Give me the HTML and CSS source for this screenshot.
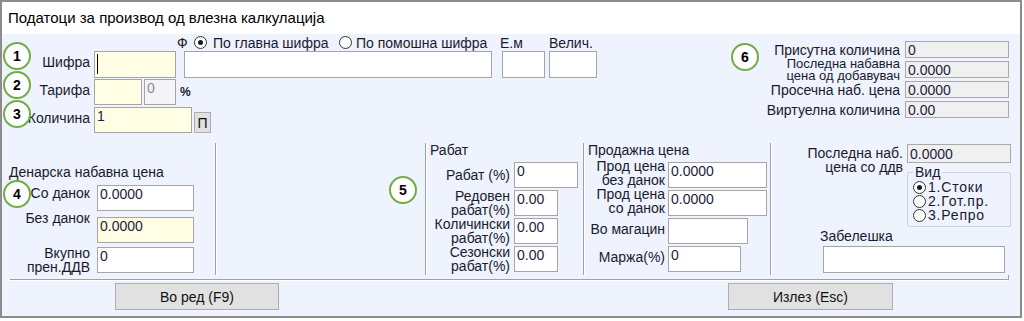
FILE: index.html
```html
<!DOCTYPE html>
<html lang="mk">
<head>
  <meta charset="UTF-8">
  <title>Податоци за производ од влезна калкулација</title>
  <link rel="stylesheet" href="styles.css">
</head>
<body>

<div class="window">
  <div class="titlebar">Податоци за производ од влезна калкулација</div>

  <div class="body">
    <div class="top">
      <div class="main">
        <div class="row row-search">
          <span class="clip">Ф</span>
          <label class="radio r-main"><span class="dot on"></span>По главна шифра</label>
          <label class="radio r-alt"><span class="dot"></span>По помошна шифра</label>
          <span class="cap cap-em">Е.м</span>
          <span class="cap">Велич.</span>
        </div>
        <div class="row row-code">
          <label class="lbl">Шифра</label>
          <span class="caret-wrap"><input class="tb yellow w-code" type="text"></span>
          <input class="tb w-name" type="text">
          <input class="tb w-em" type="text">
          <input class="tb w-vel" type="text">
        </div>
        <div class="row row-tariff">
          <label class="lbl">Тарифа</label>
          <input class="tb yellow w-tariff" type="text">
          <input class="tb muted w-rate" type="text" value="0">
          <span class="pct">%</span>
        </div>
        <div class="row row-qty">
          <label class="lbl">Количина</label>
          <input class="tb yellow w-qty" type="text" value="1">
          <button class="mini">П</button>
        </div>
      </div>

      <div class="stock">
        <span class="lbl">Присутна количина</span>
        <input class="ro" type="text" value="0">
        <span class="lbl tight">Последна набавна<br>цена од добавувач</span>
        <input class="ro" type="text" value="0.0000">
        <span class="lbl">Просечна наб. цена</span>
        <input class="ro" type="text" value="0.0000">
        <span class="lbl">Виртуелна количина</span>
        <input class="ro" type="text" value="0.00">
      </div>
    </div>

    <div class="lower">
      <div class="group g-den">
        <div class="head">Денарска набавна цена</div>
        <div class="frow d1">
          <label class="lbl">Со данок</label>
          <input class="tb w-den" type="text" value="0.0000">
        </div>
        <div class="frow d2">
          <label class="lbl">Без данок</label>
          <input class="tb yellow w-den" type="text" value="0.0000">
        </div>
        <div class="frow d3">
          <label class="lbl two">Вкупно<br>прен.ДДВ</label>
          <input class="tb w-den" type="text" value="0">
        </div>
      </div>

      <div class="group g-gap"></div>

      <div class="group g-rabat">
        <div class="head">Рабат</div>
        <div class="frow first">
          <label class="lbl">Рабат (%)</label>
          <input class="tb w-r1" type="text" value="0">
        </div>
        <div class="frow">
          <label class="lbl two">Редовен<br>рабат(%)</label>
          <input class="tb w-r2" type="text" value="0.00">
        </div>
        <div class="frow">
          <label class="lbl two">Количински<br>рабат(%)</label>
          <input class="tb w-r2" type="text" value="0.00">
        </div>
        <div class="frow">
          <label class="lbl two">Сезонски<br>рабат(%)</label>
          <input class="tb w-r2" type="text" value="0.00">
        </div>
      </div>

      <div class="group g-prod">
        <div class="head">Продажна цена</div>
        <div class="frow first">
          <label class="lbl two">Прод цена<br>без данок</label>
          <input class="tb w-p1" type="text" value="0.0000">
        </div>
        <div class="frow">
          <label class="lbl two">Прод цена<br>со данок</label>
          <input class="tb w-p1" type="text" value="0.0000">
        </div>
        <div class="frow">
          <label class="lbl">Во магацин</label>
          <input class="tb w-p3" type="text">
        </div>
        <div class="frow">
          <label class="lbl">Маржа(%)</label>
          <input class="tb w-p4" type="text" value="0">
        </div>
      </div>

      <div class="group g-right">
        <div class="last-grid">
          <span class="lbl two">Последна наб.<br>цена со ддв</span>
          <input class="ro ro-tall" type="text" value="0.0000">
          <fieldset class="kind">
            <legend>Вид</legend>
            <label class="vrow"><span class="dot on"></span>1.Стоки</label>
            <label class="vrow"><span class="dot"></span>2.Гот.пр.</label>
            <label class="vrow"><span class="dot"></span>3.Репро</label>
          </fieldset>
        </div>
        <div class="note">
          <div class="note-lbl">Забелешка</div>
          <input class="tb w-note" type="text">
        </div>
      </div>
    </div>

    <div class="rule"></div>

    <div class="actions">
      <button class="btn">Во ред (F9)</button>
      <button class="btn btn-exit">Излез (Esc)</button>
    </div>
  </div>

  <!-- numbered callouts -->
  <span class="badge b1">1</span>
  <span class="badge b2">2</span>
  <span class="badge b3">3</span>
  <span class="badge b4">4</span>
  <span class="badge b5">5</span>
  <span class="badge b6">6</span>
</div>

</body>
</html>
```

FILE: styles.css
```css
body {
  margin: 0;
  background-color: #fff;
  font-family: "Liberation Sans", Arial, sans-serif;
  font-size: 14px;
  color: #1a1a2e;
}
.window {
  position: relative;
  width: 1022px;
  height: 318px;
  box-sizing: border-box;
  border: 2px solid #8c8c8c;
  display: flex;
  flex-direction: column;
}
.titlebar {
  height: 32px;
  line-height: 32px;
  padding-left: 6px;
  font-size: 15px;
  color: #000;
  background-color: #fff;
}
.body {
  flex: 1;
  background-color: #eef3fd;
}

/* top area */
.top {
  display: flex;
  height: 109px;
}
.row {
  display: flex;
  align-items: center;
}
.row-search {
  height: 17px;
  padding-left: 175px;
}
.clip {
  width: 11px;
  white-space: nowrap;
}
.radio {
  display: flex;
  align-items: center;
  white-space: nowrap;
}
.r-main {
  width: 145px;
  margin-left: 6px;
}
.r-alt {
  width: 161px;
}
.radio .dot {
  margin-right: 6px;
}
.r-alt .dot {
  margin-right: 4px;
}
.cap-em {
  width: 49px;
}
.dot {
  width: 13px;
  height: 13px;
  box-sizing: border-box;
  border: 1px solid #333;
  border-radius: 50%;
  background-color: #fff;
  display: inline-flex;
  align-items: center;
  justify-content: center;
  flex-shrink: 0;
}
.dot.on::after {
  content: "";
  width: 5px;
  height: 5px;
  border-radius: 50%;
  background-color: #1a1a1a;
}

.lbl {
  text-align: right;
  white-space: nowrap;
}
.main .lbl {
  width: 88px;
  margin-right: 4px;
  padding-bottom: 5px;
}
.tb {
  box-sizing: border-box;
  height: 26px;
  margin: 0;
  padding: 0 2px 8px;
  border: 1px solid #a5a5a5;
  background-color: #fff;
  font-family: inherit;
  font-size: 14px;
  color: #1c1c3c;
  outline: none;
}
.tb.yellow {
  background-color: #fffde3;
}
.tb.muted {
  background-color: #f2f4f8;
  color: #8c8c8c;
}
.row-code .tb {
  height: 27px;
}
.row-tariff {
  margin-top: 1px;
}
.row-qty {
  margin-top: 2px;
}
.caret-wrap {
  position: relative;
  display: flex;
}
.caret-wrap::after {
  content: "";
  position: absolute;
  left: 3px;
  top: 3px;
  width: 1px;
  height: 20px;
  background-color: #000;
}
.w-code { width: 82px; }
.w-name { width: 308px; margin-left: 8px; }
.w-em { width: 43px; margin-left: 10px; }
.w-vel { width: 48px; margin-left: 4px; }
.w-tariff { width: 48px; }
.w-rate { width: 32px; margin-left: 2px; }
.w-qty { width: 98px; }
.pct {
  margin-left: 4px;
  font-size: 12px;
  font-weight: bold;
}
.mini {
  align-self: flex-end;
  width: 17px;
  height: 21px;
  margin-left: 2px;
  padding: 0;
  border: 1px solid #adadad;
  background-color: #e1e1e1;
  font-family: inherit;
  font-size: 14px;
  color: #111;
}

.stock {
  margin: 7px 11px 0 auto;
  display: grid;
  grid-template-columns: auto 104px;
  grid-auto-rows: 17px;
  column-gap: 5px;
  row-gap: 3px;
  align-items: center;
  align-content: start;
}
.stock .tight {
  font-size: 13px;
  line-height: 12px;
}
.ro {
  box-sizing: border-box;
  height: 17px;
  margin: 0;
  padding: 0 2px;
  border: 1px solid #a9a9a9;
  background-color: #f0f0f0;
  font-family: inherit;
  font-size: 14px;
  color: #1c1c3c;
  outline: none;
}

/* lower groups */
.lower {
  display: flex;
  height: 132px;
}
.group {
  box-sizing: border-box;
}
.g-den {
  width: 214px;
  padding-top: 22px;
  border-right: 1px solid #a0a0a0;
  box-shadow: 1px 0 0 #fff;
}
.g-gap {
  width: 209px;
}
.g-rabat,
.g-prod,
.g-right {
  border-left: 1px solid #a0a0a0;
  box-shadow: inset 1px 0 0 #fff;
}
.g-rabat { width: 158px; }
.g-prod { width: 187px; }
.g-right { flex: 1; }
.head {
  line-height: 15px;
  padding-left: 4px;
  white-space: nowrap;
}
.g-den .head {
  padding-left: 7px;
}
.frow {
  display: flex;
  align-items: center;
  margin-top: 2px;
}
.frow.first {
  margin-top: 4px;
}
.lbl.two {
  line-height: 14px;
}
.g-den .frow {
  align-items: flex-start;
}
.g-den .lbl {
  width: 88px;
  margin-right: 7px;
  line-height: 15px;
}
.g-den .lbl.two {
  line-height: 14px;
}
.d1 { margin-top: 5px; }
.d1 .lbl { margin-top: 1px; }
.d2 { margin-top: 6px; }
.d2 .lbl { margin-top: -6px; }
.d3 { margin-top: 4px; }
.d3 .lbl { margin-top: -1px; }
.w-den { width: 97px; }

.g-rabat .lbl {
  width: 84px;
  margin-right: 4px;
}
.g-rabat .lbl.two {
  margin-top: -2px;
  margin-bottom: -2px;
}
.w-r1 { width: 64px; }
.w-r2 { width: 44px; }

.g-prod .lbl {
  width: 81px;
  margin-right: 3px;
  margin-top: -4px;
  line-height: 15px;
}
.g-prod .lbl.two {
  line-height: 14px;
  margin-top: -6px;
  margin-bottom: -2px;
}
.w-p1 { width: 99px; }
.w-p3 { width: 80px; }
.w-p4 { width: 73px; }

.last-grid {
  display: grid;
  grid-template-columns: 132px 104px;
  grid-template-rows: 27px auto;
  column-gap: 4px;
  padding-top: 1px;
}
.last-grid .lbl {
  margin-top: 2px;
}
.ro-tall {
  height: 19px;
}
.kind {
  grid-column: 2;
  margin: -6px 0 0;
  padding: 1px 0 4px 5px;
  border: 1px solid #cdd3dc;
  border-radius: 2px;
}
.kind legend {
  padding: 0 2px;
  line-height: 14px;
}
.vrow {
  display: flex;
  align-items: center;
  height: 14px;
  font-size: 14px;
  line-height: 14px;
  letter-spacing: 0.8px;
  white-space: nowrap;
}
.vrow .dot {
  margin-right: 2px;
}
.note {
  padding-left: 49px;
}
.note-lbl {
  margin-top: 2px;
  line-height: 14px;
}
.w-note {
  width: 182px;
  height: 27px;
  margin: 3px 0 0 3px;
}

.rule {
  height: 4px;
  margin: 0 11px 0 8px;
  border-bottom: 1px solid #a0a0a0;
  border-right: 1px solid #a0a0a0;
  box-shadow: 0 1px 0 #fff;
}
.actions {
  display: flex;
  margin-top: 3px;
  padding-left: 113px;
}
.btn {
  width: 164px;
  height: 27px;
  padding: 0;
  border: 1px solid #adadad;
  background-color: #e1e1e1;
  font-family: inherit;
  font-size: 14px;
  color: #111;
}
.btn-exit {
  width: 165px;
  margin-left: 449px;
}

/* callouts */
.badge {
  position: absolute;
  width: 28px;
  height: 28px;
  box-sizing: border-box;
  border: 2px solid #70ad47;
  border-radius: 50%;
  background-color: #fff;
  display: flex;
  align-items: center;
  justify-content: center;
  font-size: 14px;
  font-weight: bold;
  color: #000;
}
.b1 { left: 1px; top: 40px; }
.b2 { left: 1px; top: 69px; }
.b3 { left: 1px; top: 98px; }
.b4 { left: 1px; top: 178px; }
.b5 { left: 387px; top: 174px; }
.b6 { left: 729px; top: 41px; }
```
